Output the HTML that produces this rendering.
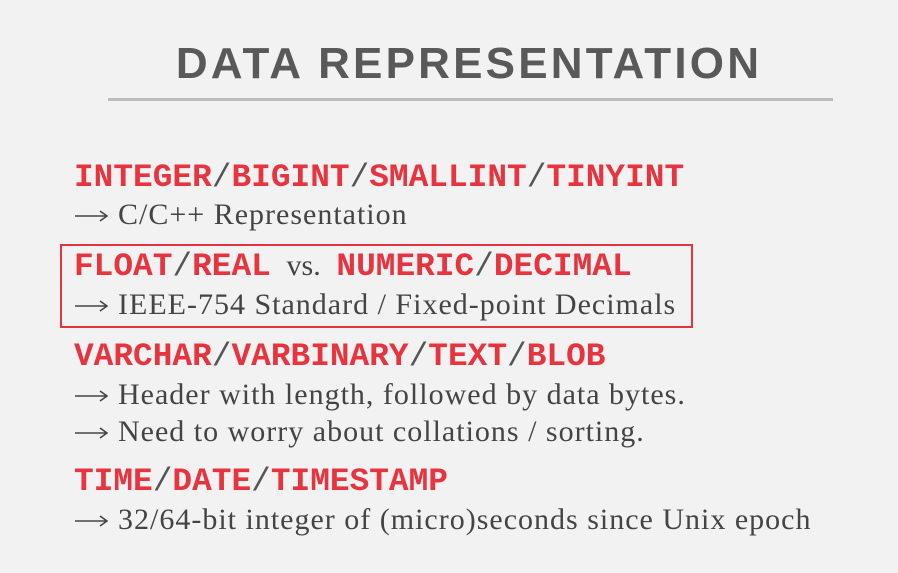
<!DOCTYPE html>
<html><head><style>
body{margin:0;width:898px;height:573px;background:#f2f2f2;position:relative;overflow:hidden;font-family:"Liberation Serif",serif}
.t{position:absolute;left:0;width:938px;text-align:center;top:36px;font:bold 44px "Liberation Sans",sans-serif;letter-spacing:3.2px;color:#595959;line-height:56px}
.rule{position:absolute;left:108px;top:98px;width:725px;height:3px;background:#bcbcbc}
.m{position:absolute;left:74px;font:bold 32.8px "Liberation Mono",monospace;color:#e8343f;white-space:nowrap;line-height:40px}
.m span{color:#555;font-weight:normal}
.m i{font:normal 30px "Liberation Serif",serif;color:#444;margin:0 -4px}
.s{position:absolute;left:74px;font-size:30px;color:#444;white-space:nowrap;line-height:36px;letter-spacing:1.0px}
.s svg{display:inline-block;width:34px;height:14px;margin-right:10px;vertical-align:1px}
.box{position:absolute;left:60px;top:244px;width:629px;height:80px;border:2px solid #e8343f}
</style></head><body>
<svg width="0" height="0" style="position:absolute"><defs><g id="a"><path d="M1 7H32M26 2L33 7L26 12" fill="none" stroke="#444" stroke-width="1.6"/></g></defs></svg>
<div class="t">DATA REPRESENTATION</div>
<div class="rule"></div>
<div class="m" style="top:158px">INTEGER<span>/</span>BIGINT<span>/</span>SMALLINT<span>/</span>TINYINT</div>
<div class="s" style="top:197px"><svg viewBox="0 0 34 14"><use href="#a"/></svg>C/C++ Representation</div>
<div class="box"></div>
<div class="m" style="top:247px">FLOAT<span>/</span>REAL <i>vs.</i> NUMERIC<span>/</span>DECIMAL</div>
<div class="s" style="top:287px"><svg viewBox="0 0 34 14"><use href="#a"/></svg>IEEE-754 Standard / Fixed-point Decimals</div>
<div class="m" style="top:337px">VARCHAR<span>/</span>VARBINARY<span>/</span>TEXT<span>/</span>BLOB</div>
<div class="s" style="top:377px"><svg viewBox="0 0 34 14"><use href="#a"/></svg>Header with length, followed by data bytes.</div>
<div class="s" style="top:414px"><svg viewBox="0 0 34 14"><use href="#a"/></svg>Need to worry about collations / sorting.</div>
<div class="m" style="top:462px">TIME<span>/</span>DATE<span>/</span>TIMESTAMP</div>
<div class="s" style="top:502px"><svg viewBox="0 0 34 14"><use href="#a"/></svg>32/64-bit integer of (micro)seconds since Unix epoch</div>
</body></html>
